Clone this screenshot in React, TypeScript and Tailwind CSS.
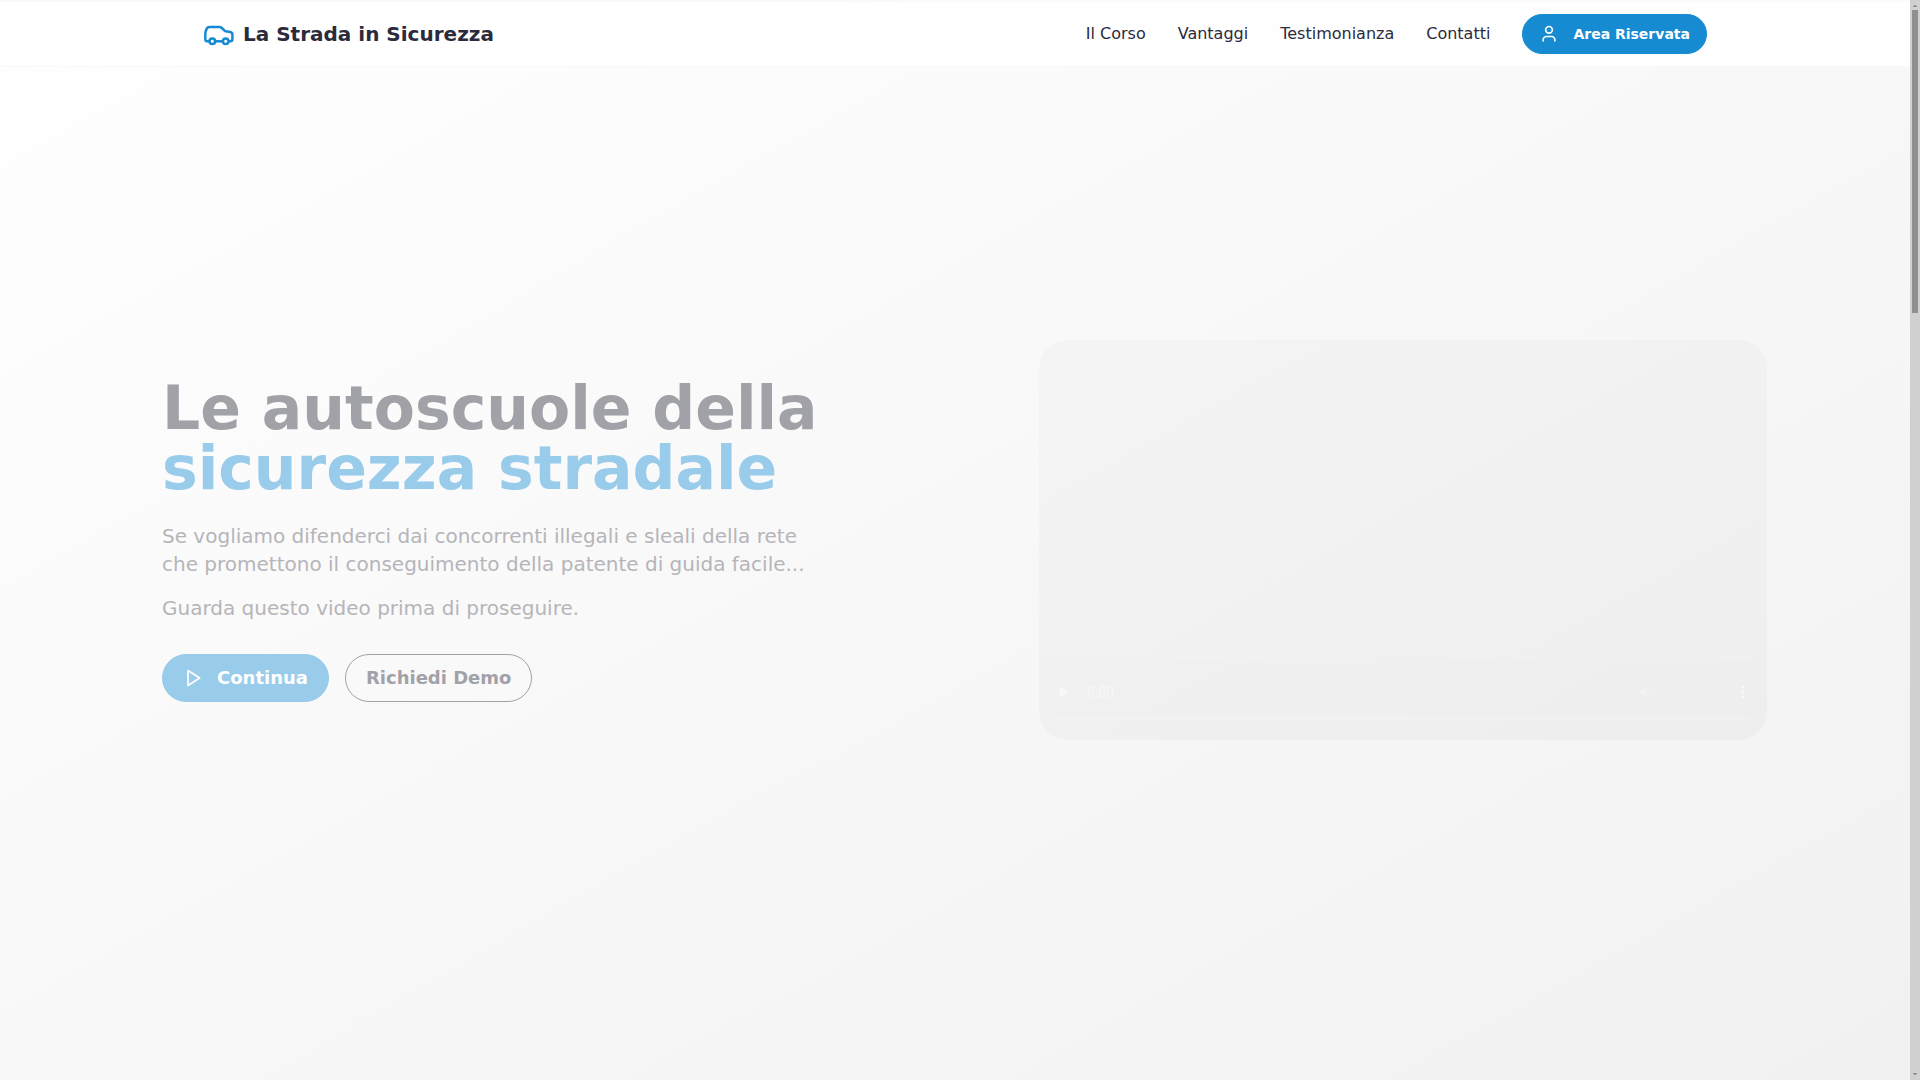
import React, { JSX } from 'react';
import { User } from 'lucide-react';
import { MdFullscreen, MdMoreVert, MdPlayArrow, MdVolumeUp } from 'react-icons/md';

interface NavLink {
  label: string;
  href: string;
}

const navLinks: NavLink[] = [
  { label: 'Il Corso', href: '#corso' },
  { label: 'Vantaggi', href: '#vantaggi' },
  { label: 'Testimonianza', href: '#testimonianza' },
  { label: 'Contatti', href: '#contatti' },
];

function CarLogo(): JSX.Element {
  return (
    <svg width="32" height="24" viewBox="-1 -2 32 24" fill="none" stroke="#168bd2" strokeWidth="2.5" strokeLinejoin="round" aria-hidden="true">
      <path d="M5.3 17.3H3.6C2.2 17.3 1.3 16.5 1.3 15.2V11.2C1.3 7.6 2.2 4.9 3.7 3.5C4.1 3.1 4.6 3 5.2 3H15.4C16.4 3 17.1 3.3 17.8 4L20.6 6.7C21 7 21.4 7.2 21.9 7.3L26.2 8C27.7 8.3 28.4 9.1 28.4 10.5V15.3C28.4 16.6 27.8 17.3 26.5 17.3H24.7" />
      <path d="M11.3 17.3H18.7" />
      <circle cx="8.3" cy="17.3" r="2.8" />
      <circle cx="21.7" cy="17.3" r="2.8" />
    </svg>
  );
}

function PlayIcon(): JSX.Element {
  return (
    <svg width="20" height="20" viewBox="0 0 24 24" fill="none" stroke="currentColor" strokeWidth="2" strokeLinejoin="round" aria-hidden="true">
      <polygon points="6 3 20 12 6 21" />
    </svg>
  );
}

function Header(): JSX.Element {
  return (
    <header className="bg-white/85 border-t-2 border-t-[#fafafa] shadow-[0_1px_0_#f8f8f8]">
      <div className="max-w-[1536px] h-16 mx-auto px-4 flex items-center justify-between">
        <a href="#" className="flex items-center gap-2 text-xl font-bold text-[#2b2b3c]">
          <CarLogo />
          <span>La Strada in Sicurezza</span>
        </a>
        <nav className="flex items-center gap-8 text-[#2b2b3c]">
          {navLinks.map((link) => (
            <a key={link.href} href={link.href}>
              {link.label}
            </a>
          ))}
          <button className="h-10 px-4 flex items-center gap-3.5 rounded-full border border-[#168bd2] bg-[#168bd2] text-sm font-bold text-white">
            <User size={20} strokeLinecap="butt" />
            Area Riservata
          </button>
        </nav>
      </div>
    </header>
  );
}

function VideoPlayer(): JSX.Element {
  return (
    <div className="w-[728px] h-[400px] flex flex-col justify-end rounded-[28px] overflow-hidden bg-black/2">
      <div className="h-20 bg-black/[0.005] text-white/50">
        <div className="h-14 pt-2 flex items-center">
          <button aria-label="Riproduci" className="w-12 h-12 flex items-center justify-center">
            <MdPlayArrow size={20} />
          </button>
          <span className="font-['Roboto',sans-serif] text-sm">0:00</span>
          <div className="ml-auto flex">
            <button aria-label="Volume" className="w-12 h-12 flex items-center justify-center text-white/20">
              <MdVolumeUp size={20} />
            </button>
            <button aria-label="Schermo intero" disabled className="w-12 h-12 flex items-center justify-center text-white/5">
              <MdFullscreen size={20} />
            </button>
            <button aria-label="Altre opzioni" className="w-12 h-12 flex items-center justify-center">
              <MdMoreVert size={20} />
            </button>
          </div>
        </div>
        <div className="h-1 mx-4 rounded-full bg-white/15" />
      </div>
    </div>
  );
}

function Hero(): JSX.Element {
  return (
    <main className="flex-1 pl-[162px] pr-[143px] pb-[66px] flex items-center justify-between">
      <div>
        <h1 className="text-6xl leading-[60px] font-bold text-[#a1a1a8]">
          Le autoscuole della
          <span className="block text-[#99cbea]">sicurezza stradale</span>
        </h1>
        <div className="mt-6 space-y-4 text-xl text-[#b5b5b9]">
          <p>
            Se vogliamo difenderci dai concorrenti illegali e sleali della rete
            <br />
            che promettono il conseguimento della patente di guida facile...
          </p>
          <p>Guarda questo video prima di proseguire.</p>
        </div>
        <div className="mt-8 flex gap-4 text-lg font-bold">
          <button className="h-12 px-5 flex items-center gap-3.5 rounded-full border border-[#99cbea] bg-[#99cbea] text-white">
            <PlayIcon />
            Continua
          </button>
          <button className="h-12 px-5 rounded-full border border-[#a1a1a8] text-[#a1a1a8]">
            Richiedi Demo
          </button>
        </div>
      </div>
      <VideoPlayer />
    </main>
  );
}

// thin scrollbar on the right edge
function ScrollRail(): JSX.Element {
  return (
    <div className="w-[10px] shrink-0 flex flex-col items-center justify-between bg-[#d0d0d0] text-[#8f8f8f]">
      <div className="w-full flex flex-col items-center">
        <svg width="4" height="10" viewBox="0 0 4 10" fill="currentColor">
          <path d="M1 5h2v1h1v1H0V6h1z" />
        </svg>
        <div className="w-[6px] h-[303px] bg-[#8f8f8f]" />
      </div>
      <svg width="4" height="10" viewBox="0 0 4 10" fill="currentColor">
        <path d="M0 3h4v1H3v1H1V4H0z" />
      </svg>
    </div>
  );
}

export default function App(): JSX.Element {
  return (
    <div className="min-h-screen flex font-['DejaVu_Sans',sans-serif]">
      <div className="flex-1 flex flex-col bg-linear-to-br from-white to-[#f1f1f1]">
        <Header />
        <Hero />
      </div>
      <ScrollRail />
    </div>
  );
}
